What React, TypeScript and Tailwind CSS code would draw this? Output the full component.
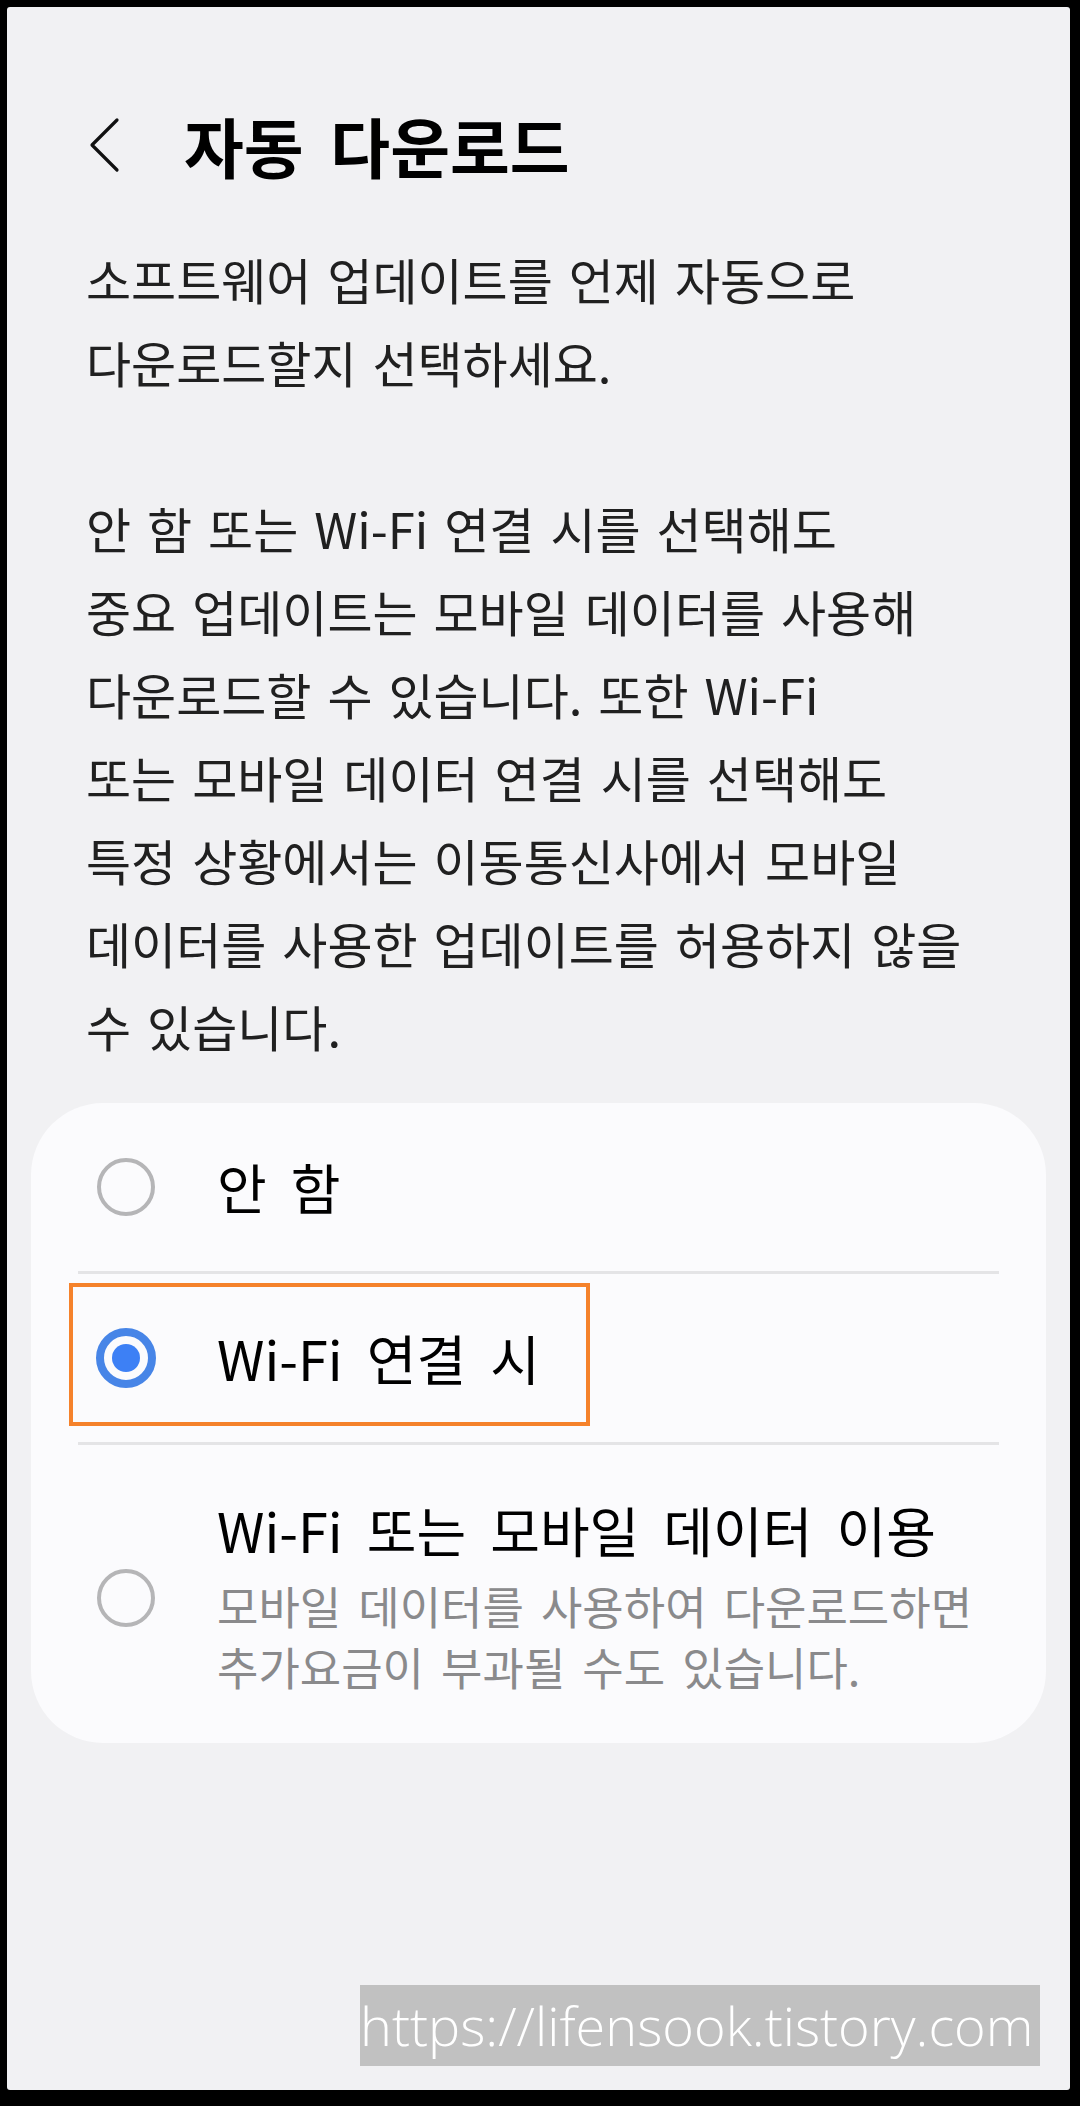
import { memo } from 'react';

type Option = {
  label: string;
  sub?: string[];
  checked?: boolean;
};

const intro = ['소프트웨어 업데이트를 언제 자동으로', '다운로드할지 선택하세요.'];

const note = [
  '안 함 또는 Wi-Fi 연결 시를 선택해도',
  '중요 업데이트는 모바일 데이터를 사용해',
  '다운로드할 수 있습니다. 또한 Wi-Fi',
  '또는 모바일 데이터 연결 시를 선택해도',
  '특정 상황에서는 이동통신사에서 모바일',
  '데이터를 사용한 업데이트를 허용하지 않을',
  '수 있습니다.',
];

const options: Option[] = [
  { label: '안 함' },
  { label: 'Wi-Fi 연결 시', checked: true },
  {
    label: 'Wi-Fi 또는 모바일 데이터 이용',
    sub: ['모바일 데이터를 사용하여 다운로드하면', '추가요금이 부과될 수도 있습니다.'],
  },
];

function Radio({ checked }: { checked?: boolean }) {
  if (checked) {
    return (
      <span className="flex h-[60px] w-[60px] items-center justify-center rounded-full border-[8px] border-[#4785e7]">
        <span className="h-[28px] w-[28px] rounded-full bg-[#3d80f5]" />
      </span>
    );
  }
  return <span className="h-[58px] w-[58px] rounded-full border-[4px] border-[#b5b5b7]" />;
}

function Divider() {
  return <div className="mx-[47px] h-[3px] bg-[#e4e4e6]" />;
}

function AppComponent() {
  return (
    <div className="h-[2106px] w-[1080px] bg-black pb-[16px] pl-[7px] pr-[10px] pt-[7px] font-['Noto_Sans_CJK_KR',sans-serif]">
      <div className="flex h-full flex-col rounded-[3px] bg-[#f1f1f3]">
        {/* header */}
        <div className="mt-[98px] flex h-[80px] items-center pl-[82px]">
          <svg width="32" height="56" viewBox="0 0 32 56" fill="none" className="shrink-0">
            <path d="M28 3 L3 28 L28 53" stroke="#111" strokeWidth="3.2" strokeLinecap="round" strokeLinejoin="round" />
          </svg>
          <h1 className="ml-[63px] whitespace-nowrap text-[65px] font-bold leading-[80px] text-black [word-spacing:12px]">
            자동 다운로드
          </h1>
        </div>

        {/* description */}
        <div className="mt-[52px] pl-[79px] text-[49px] leading-[83px] text-[#202020] [word-spacing:5px]">
          {intro.map((line) => (
            <div key={line} className="whitespace-nowrap">
              {line}
            </div>
          ))}
          <div className="h-[83px]" />
          {note.map((line) => (
            <div key={line} className="whitespace-nowrap">
              {line}
            </div>
          ))}
        </div>

        {/* options card */}
        <div className="mx-[24px] mt-[36px] rounded-[72px] bg-[#fbfbfd]">
          {options.map((opt, i) => (
            <div key={opt.label}>
              {i > 0 && <Divider />}
              <div
                className={
                  opt.sub
                    ? 'relative flex items-center gap-[61px] pb-[46px] pl-[65px] pt-[54px]'
                    : 'relative flex h-[168px] items-center gap-[61px] pl-[65px]'
                }
              >
                <span className="flex w-[60px] shrink-0 justify-center">
                  <Radio checked={opt.checked} />
                </span>
                <div>
                  <div className="whitespace-nowrap text-[54px] leading-[62px] text-black [word-spacing:12px]">
                    {opt.label}
                  </div>
                  {opt.sub && (
                    <div className="mt-[14px] text-[45px] leading-[61px] text-[#8a8a8c] [word-spacing:7px]">
                      {opt.sub.map((s) => (
                        <div key={s} className="whitespace-nowrap">
                          {s}
                        </div>
                      ))}
                    </div>
                  )}
                </div>
                {opt.checked && (
                  <div className="pointer-events-none absolute left-[38px] top-[9px] h-[143px] w-[521px] border-[4px] border-[#f5822b]" />
                )}
              </div>
            </div>
          ))}
        </div>

        {/* watermark */}
        <div className="mb-[24px] mr-[30px] mt-auto flex h-[81px] w-[680px] items-center self-end overflow-hidden bg-[#c1c1c1]">
          <span className="whitespace-nowrap font-['Open_Sans',sans-serif] text-[54px] font-light leading-[81px] text-white">
            https://lifensook.tistory.com
          </span>
        </div>
      </div>
    </div>
  );
}

const App = memo(AppComponent);
export default App;
